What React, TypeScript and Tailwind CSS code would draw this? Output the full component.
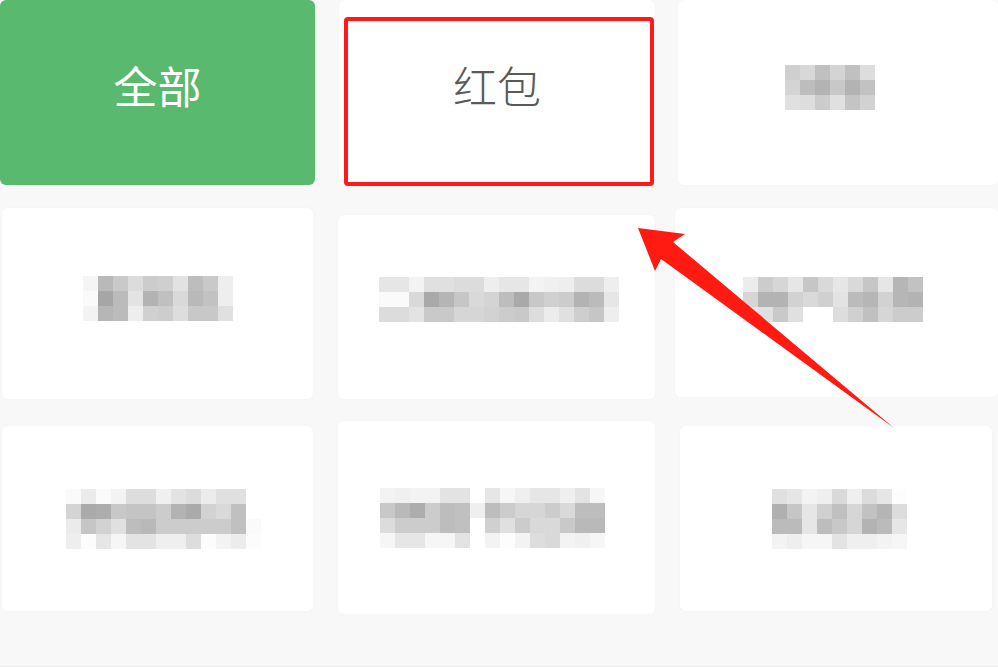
const mosaics: Record<string, string[][]> = {
  a: [
    ["cf", "d8", "c0", "d4", "c0", "dd"],
    ["d4", "bd", "b3", "c8", "b3", "c2"],
    ["e0", "dd", "cc", "e0", "c4", "d2"],
  ],
  b: [
    ["f5", "b9", "c9", "dc", "cc", "cf", "e2", "bd", "c9", "ee"],
    ["fa", "a6", "bb", "e3", "b3", "c0", "d9", "b9", "c2", "ee"],
    ["f3", "b6", "bb", "ee", "d0", "cd", "dd", "c8", "c8", "e0"],
  ],
  c: [
    ["e6", "e6", "f3", "e0", "e0", "dc", "dc", "ee", "e6", "e6", "f3", "f0", "ee", "dc", "dc", "ee"],
    ["fa", "fa", "d9", "a9", "b5", "c6", "d9", "d4", "bd", "a9", "c8", "d0", "cc", "b3", "bb", "e6"],
    ["dc", "dc", "e3", "c9", "c9", "d6", "d6", "d2", "cc", "c9", "dd", "ec", "e0", "ce", "c6", "ee"],
  ],
  d: [
    ["ec", "cc", "d6", "e6", "c6", "d9", "e6", "d9", "c6", "e6", "b6", "c2"],
    ["d6", "b3", "b3", "d2", "d9", "d0", "e3", "bb", "b6", "d2", "b6", "b3"],
    ["e6", "e0", "c9", "e0", "ff", "ff", "dd", "d0", "c0", "d6", "cc", "cc"],
  ],
  e: [
    ["fa", "eb", "fb", "f3", "dd", "dd", "f0", "e3", "dc", "ec", "e0", "e0", "ff"],
    ["d4", "aa", "ad", "c8", "c4", "c4", "cc", "b3", "aa", "d2", "d9", "c0", "ff"],
    ["eb", "c6", "d2", "e0", "bd", "b9", "cc", "cc", "cc", "cc", "cc", "c0", "fa"],
    ["ee", "fc", "e6", "f6", "e3", "e3", "ef", "ef", "dd", "fc", "f3", "ec", "fc"],
  ],
  f: [
    ["f3", "f0", "f3", "f3", "e3", "e3", "ff", "e6", "f6", "ef", "e6", "e6", "ef", "e3", "f6"],
    ["c8", "b9", "ad", "cc", "bd", "c0", "ef", "bd", "cc", "d6", "d6", "cc", "d9", "bd", "bd"],
    ["dc", "cc", "cc", "cc", "bd", "c0", "ff", "d0", "e0", "cc", "d9", "d9", "c9", "b9", "b9"],
    ["f6", "e6", "e6", "f6", "f6", "e3", "ff", "f3", "fd", "f3", "dd", "d9", "f3", "f0", "f6"],
  ],
  g: [
    ["e0", "e6", "f3", "ef", "d9", "ef", "dc", "e6", "fd"],
    ["b0", "c6", "e6", "d0", "c0", "d6", "c2", "b5", "dc"],
    ["bb", "bb", "e6", "bd", "c8", "d6", "b3", "bb", "e6"],
    ["f3", "ee", "f6", "f6", "e3", "ef", "ef", "f3", "f6"],
  ],
};

function Mosaic({ id, dx = 0, dy = 0 }: { id: string; dx?: number; dy?: number }) {
  const rows = mosaics[id];
  const w = rows[0].length * 15;
  const h = rows.length * 15;
  return (
    <svg width={w} height={h} style={{ transform: `translate(${dx}px, ${dy}px)` }}>
      {rows.map((row, y) =>
        row.map((v, x) => (
          <rect key={`${x}-${y}`} x={x * 15} y={y * 15} width={15} height={15} fill={`#${v}${v}${v}`} />
        ))
      )}
    </svg>
  );
}

function Card({ children, className = "" }: { children?: React.ReactNode; className?: string }) {
  return (
    <div
      className={`relative flex items-center justify-center rounded-md bg-white shadow-[0_0_3px_rgba(0,0,0,0.03)] ${className}`}
    >
      {children}
    </div>
  );
}

export default function App() {
  return (
    <div
      className="relative h-[667px] w-[998px] overflow-hidden bg-[#f8f8f8]"
      style={{ fontFamily: '"Noto Sans CJK SC", "Noto Sans", sans-serif' }}
    >
      <div className="grid grid-cols-[315px_317px_320px] grid-rows-[185px_189px_187px] gap-x-[23px] gap-y-[25px]">
        <div className="flex items-center justify-center rounded-md bg-[#59b96f] text-[44px] leading-none text-white">
          <span className="-translate-y-[8px]">全部</span>
        </div>
        <Card className="ml-[1px]">
          <span className="-translate-y-[8px] text-[44px] font-light leading-none text-[#5a5a5a]">红包</span>
          <div className="absolute left-[5px] right-[1px] top-[17px] bottom-[-1px] rounded-[4px] border-[4px] border-[#ff1a1a]" />
        </Card>
        <Card>
          <Mosaic id="a" dx={-8} dy={-5} />
        </Card>
        <Card className="mx-[2px] mt-[-2px]">
          <Mosaic id="b" dy={-5} />
        </Card>
        <Card className="mt-[5px]">
          <Mosaic id="c" dx={2} dy={-8} />
        </Card>
        <Card className="mb-[2px] ml-[-3px] mt-[-2px]">
          <Mosaic id="d" dx={-4} dy={-3} />
        </Card>
        <Card className="mx-[2px] mt-[2px]">
          <Mosaic id="e" dx={6} />
        </Card>
        <Card className="-mt-[3px] mb-[-3px]">
          <Mosaic id="f" dx={-4} />
        </Card>
        <Card className="ml-[2px] mr-[6px] mt-[2px]">
          <Mosaic id="g" dx={3} />
        </Card>
      </div>

      <svg className="pointer-events-none absolute left-0 top-0" width="998" height="667">
        <polygon
          points="638,228 685,234 673,242 894,428 661,259 655,271"
          fill="#ff1a12"
        />
      </svg>
      <div className="absolute bottom-0 left-0 h-[1px] w-full bg-[#ececec]" />
    </div>
  );
}
